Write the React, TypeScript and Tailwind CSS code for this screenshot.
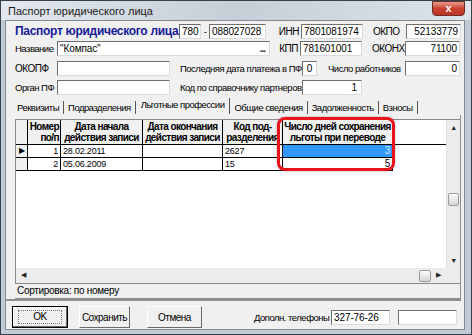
import React from "react";

const inputCls =
  "h-[15px] bg-white border border-t-[#6f6f6f] border-l-[#6f6f6f] border-b-[#dadada] border-r-[#dadada] leading-[13px] px-[2px] overflow-hidden whitespace-nowrap shrink-0 text-[10px] tracking-[-0.1px]";

const Label = ({ cls, children }: { cls: string; children?: React.ReactNode }) => (
  <div className={`shrink-0 whitespace-nowrap leading-[15px] ${cls}`}>{children}</div>
);

const Tab = ({ label, active }: { label: string; active?: boolean }) => (
  <div
    className={`px-[4px] whitespace-nowrap border-r border-[#555] leading-[13px] ${
      active ? "-mt-[3px] pb-[3px] px-[5px]" : ""
    }`}
  >
    {label}
  </div>
);

const App = () => {
  return (
    <div className="w-[472px] h-[335px] bg-[#c3ccd5] border border-[#34414d] flex flex-col overflow-hidden font-['Liberation_Sans',Arial,sans-serif] text-[9.5px] tracking-[-0.5px] text-black">
      {/* title bar */}
      <div className="h-[19px] flex items-start justify-between bg-gradient-to-r from-[#e3e8ee] via-[#c6ced7] to-[#dde3ea]">
        <div className="pl-[7px] pt-[4px] text-[11px] leading-[12px] tracking-normal text-[#1b1b1b]">Паспорт юридического лица</div>
        <div className="mr-[6px] w-[33px] h-[15px] rounded-b-[4px] bg-gradient-to-b from-[#e79a8f] via-[#c8422f] to-[#b83624] border border-[#6e2b22] flex items-center justify-center text-white font-bold text-[11px] leading-none tracking-normal">
          x
        </div>
      </div>

      {/* client area */}
      <div className="flex-1 ml-[4px] mr-[6px] mb-[4px] bg-[#f0f0f0] border border-[#7f8a95] flex flex-col">
        {/* row 1 */}
        <div className="flex items-center mt-[3px] pl-[9px]">
          <div className="w-[164px] shrink-0 font-bold text-[12px] leading-[15px] text-[#161a9a] tracking-[-0.3px] whitespace-nowrap">
            Паспорт юридического лица
          </div>
          <div className={`${inputCls} w-[22px]`}>780</div>
          <Label cls="w-[8px] text-center">-</Label>
          <div className={`${inputCls} w-[57px]`}>088027028</div>
          <Label cls="w-[35px] text-right pr-[2px] text-[10px]">ИНН</Label>
          <div className={`${inputCls} w-[62px]`}>7801081974</div>
          <Label cls="w-[43px] pl-[10px] text-[10px]">ОКПО</Label>
          <div className={`${inputCls} w-[55px] text-right`}>52133779</div>
        </div>

        {/* row 2 */}
        <div className="flex items-center mt-[2px] pl-[9px]">
          <Label cls="w-[42px]">Название</Label>
          <div className={`${inputCls} w-[213px] flex justify-between`}>
            <span>"Компас"</span>
            <span className="text-[#333] font-bold tracking-[-1px] pr-[2px]">...</span>
          </div>
          <Label cls="w-[30px] text-right pr-[2px] text-[10px]">КПП</Label>
          <div className={`${inputCls} w-[62px]`}>781601001</div>
          <Label cls="w-[43px] pl-[10px] text-[10px]">ОКОНХ</Label>
          <div className={`${inputCls} w-[55px] text-right`}>71100</div>
        </div>

        {/* row 3 */}
        <div className="flex items-center mt-[5px] pl-[9px]">
          <Label cls="w-[42px] text-[10px]">ОКОПФ</Label>
          <div className={`${inputCls} w-[113px]`}></div>
          <Label cls="w-[132px] pl-[10px]">Последняя дата платежа в ПФ</Label>
          <div className={`${inputCls} w-[15px] text-center`}>0</div>
          <Label cls="w-[88px] pl-[11px]">Число работников</Label>
          <div className={`${inputCls} w-[55px] text-right`}>0</div>
        </div>

        {/* row 4 */}
        <div className="flex items-center mt-[4px] pl-[9px]">
          <Label cls="w-[42px]">Орган ПФ</Label>
          <div className={`${inputCls} w-[113px]`}></div>
          <Label cls="w-[132px] pl-[10px]">Код по справочнику партнеров</Label>
          <div className={`${inputCls} w-[60px] text-right pr-[4px]`}>1</div>
        </div>

        {/* tabs */}
        <div className="flex items-end mt-[5px] pl-[7px] h-[14px]">
          <Tab label="Реквизиты" />
          <Tab label="Подразделения" />
          <Tab label="Льготные профессии" active />
          <Tab label="Общие сведения" />
          <Tab label="Задолженность" />
          <Tab label="Взносы" />
        </div>

        {/* tab page */}
        <div className="relative mt-[1px] mr-[3px] h-[186px] border-b-2 border-r border-[#8e8e8e] flex flex-col">
          <div className="ml-[9px] mt-[4px] flex-1 flex flex-col border-l border-t border-[#8a8a8a] bg-white">
            <div className="flex flex-1">
              {/* grid */}
              <div className="flex-1 flex flex-col">
                <div className="flex h-[25px] bg-[#f0f0f0] font-bold text-[10px] leading-[11px] tracking-[-0.6px] border-b border-black">
                  <div className="w-[12px] border-r border-black"></div>
                  <div className="w-[33px] border-r border-black text-right pr-[1px] pt-[1px]">
                    Номер
                    <br />
                    по/п
                  </div>
                  <div className="w-[82px] border-r border-black text-center pt-[1px] overflow-hidden whitespace-nowrap">
                    Дата начала
                    <br />
                    действия записи
                  </div>
                  <div className="w-[80px] border-r border-black text-center pt-[1px] overflow-hidden whitespace-nowrap">
                    Дата окончания
                    <br />
                    действия записи
                  </div>
                  <div className="w-[60px] border-r border-black text-center pt-[1px] overflow-hidden whitespace-nowrap">
                    Код под-
                    <br />
                    разделения
                  </div>
                  <div className="w-[110px] border-r border-black text-center pt-[1px] overflow-hidden whitespace-nowrap">
                    Число дней сохранения
                    <br />
                    льготы при переводе
                  </div>
                  <div className="flex-1 bg-white"></div>
                </div>
                {[
                  { n: "1", d: "28.02.2011", k: "2627", v: "3", sel: true },
                  { n: "2", d: "05.06.2009", k: "15", v: "5", sel: false },
                ].map((r) => (
                  <div key={r.n} className="flex h-[13px] leading-[12px] text-[9px] tracking-[-0.2px]">
                    <div className="w-[12px] border-r border-b border-black bg-[#f0f0f0] flex items-center justify-center text-[8px]">
                      {r.sel ? "▶" : ""}
                    </div>
                    <div className="w-[33px] border-r border-b border-black text-right pr-[2px]">{r.n}</div>
                    <div className="w-[82px] border-r border-b border-black pl-[2px]">{r.d}</div>
                    <div className="w-[80px] border-r border-b border-black"></div>
                    <div className="w-[60px] border-r border-b border-black pl-[2px]">{r.k}</div>
                    <div
                      className={`w-[110px] border-r border-b border-black text-right pr-[2px] text-[10px] ${
                        r.sel ? "bg-[#3399ff] text-[#cfe6ff]" : ""
                      }`}
                    >
                      {r.v}
                    </div>
                    <div className="flex-1"></div>
                  </div>
                ))}
              </div>
              {/* vertical scrollbar */}
              <div className="w-[14px] bg-[#ececec] border-l border-[#e0e0e0] flex flex-col items-center text-[7px] leading-none text-[#222]">
                <div className="mt-[4px]">▲</div>
                <div className="mt-[62px] w-[11px] h-[13px] rounded-[2px] border border-[#9a9a9a] bg-gradient-to-b from-[#fafafa] to-[#d6d6d6]"></div>
                <div className="mt-auto mb-[4px]">▼</div>
              </div>
            </div>
            {/* horizontal scrollbar */}
            <div className="h-[15px] bg-[#ececec] flex items-center text-[7px] text-[#222] pr-[20px]">
              <div className="ml-[5px]">◀</div>
              <div className="ml-auto w-[12px] h-[12px] rounded-[2px] border border-[#9a9a9a] bg-gradient-to-b from-[#fafafa] to-[#d6d6d6]"></div>
              <div className="ml-[5px]">▶</div>
            </div>
          </div>
          {/* status */}
          <div className="ml-[9px] h-[16px] border-t border-b border-[#8a8a8a] leading-[14px] pl-[2px] text-[10px] tracking-[-0.3px]">
            Сортировка: по номеру
          </div>

          {/* highlight */}
          <div className="absolute left-[271px] top-[2px] w-[118px] h-[54px] rounded-[8px] border-[3px] border-[#e8141b] shadow-[0_0_2px_rgba(120,0,0,0.5)]"></div>
        </div>

        {/* bottom row */}
        <div className="flex items-center mt-[5px] pl-[6px] text-[10px]">
          <div className="w-[56px] h-[22px] border border-black flex items-center justify-center bg-[#f0f0f0] shadow-[inset_-1px_-1px_0_#696969,inset_1px_1px_0_#fff]">
            <span className="border border-dotted border-[#777] px-[14px] leading-[12px]">OK</span>
          </div>
          <div className="ml-[11px] w-[51px] h-[22px] flex items-center justify-center bg-[#f0f0f0] border border-t-white border-l-white border-b-[#696969] border-r-[#696969]">
            Сохранить
          </div>
          <div className="ml-[17px] w-[55px] h-[22px] flex items-center justify-center bg-[#f0f0f0] border border-t-white border-l-white border-b-[#696969] border-r-[#696969]">
            Отмена
          </div>
          <Label cls="ml-[52px] w-[77px] text-[9.5px]">Дополн. телефоны</Label>
          <div className={`${inputCls} w-[59px]`}>327-76-26</div>
          <div className={`${inputCls} ml-[8px] w-[59px]`}></div>
        </div>
      </div>
    </div>
  );
};

export default App;
